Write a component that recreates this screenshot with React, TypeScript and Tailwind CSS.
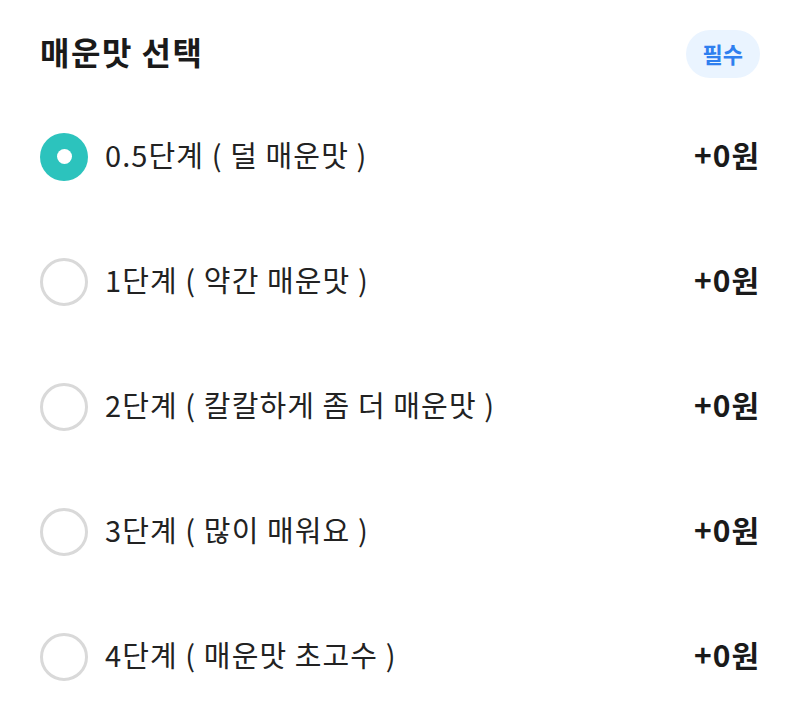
import React from "react";

const options = [
  "0.5단계 ( 덜 매운맛 )",
  "1단계 ( 약간 매운맛 )",
  "2단계 ( 칼칼하게 좀 더 매운맛 )",
  "3단계 ( 많이 매워요 )",
  "4단계 ( 매운맛 초고수 )",
];

export default function App() {
  const selected = 0;
  return (
    <div
      className="w-[800px] h-[717px] bg-white px-[40px] pt-[30px] overflow-hidden"
      style={{ fontFamily: '"Noto Sans CJK KR", "Noto Sans", sans-serif' }}
    >
      <div className="flex items-center justify-between h-[48px]">
        <h2 className="text-[32px] font-bold text-[#1a1a1a] tracking-[1.5px] leading-none pb-[6px]">매운맛 선택</h2>
        <span className="h-[48px] px-[17px] rounded-full bg-[#eaf4ff] text-[#2f7fef] text-[22px] font-bold flex items-center pb-[2px]">
          필수
        </span>
      </div>
      <div className="mt-[16px] flex flex-col">
        {options.map((label, i) => (
          <div key={i} className="h-[125px] flex items-center justify-between">
            <div className="flex items-center gap-[17px]">
              {i === selected ? (
                <span className="w-[48px] h-[48px] rounded-full bg-[#2cc3bd] flex items-center justify-center">
                  <span className="w-[15px] h-[15px] rounded-full bg-white" />
                </span>
              ) : (
                <span className="w-[48px] h-[48px] rounded-full border-[3px] border-[#d9d9d9] bg-white" />
              )}
              <span className="text-[29px] text-[#222222] tracking-[1.1px] leading-none pb-[4px]">{label}</span>
            </div>
            <span className="text-[30px] font-bold text-[#1a1a1a] tracking-[1px] leading-none pb-[5px]">+0원</span>
          </div>
        ))}
      </div>
    </div>
  );
}
